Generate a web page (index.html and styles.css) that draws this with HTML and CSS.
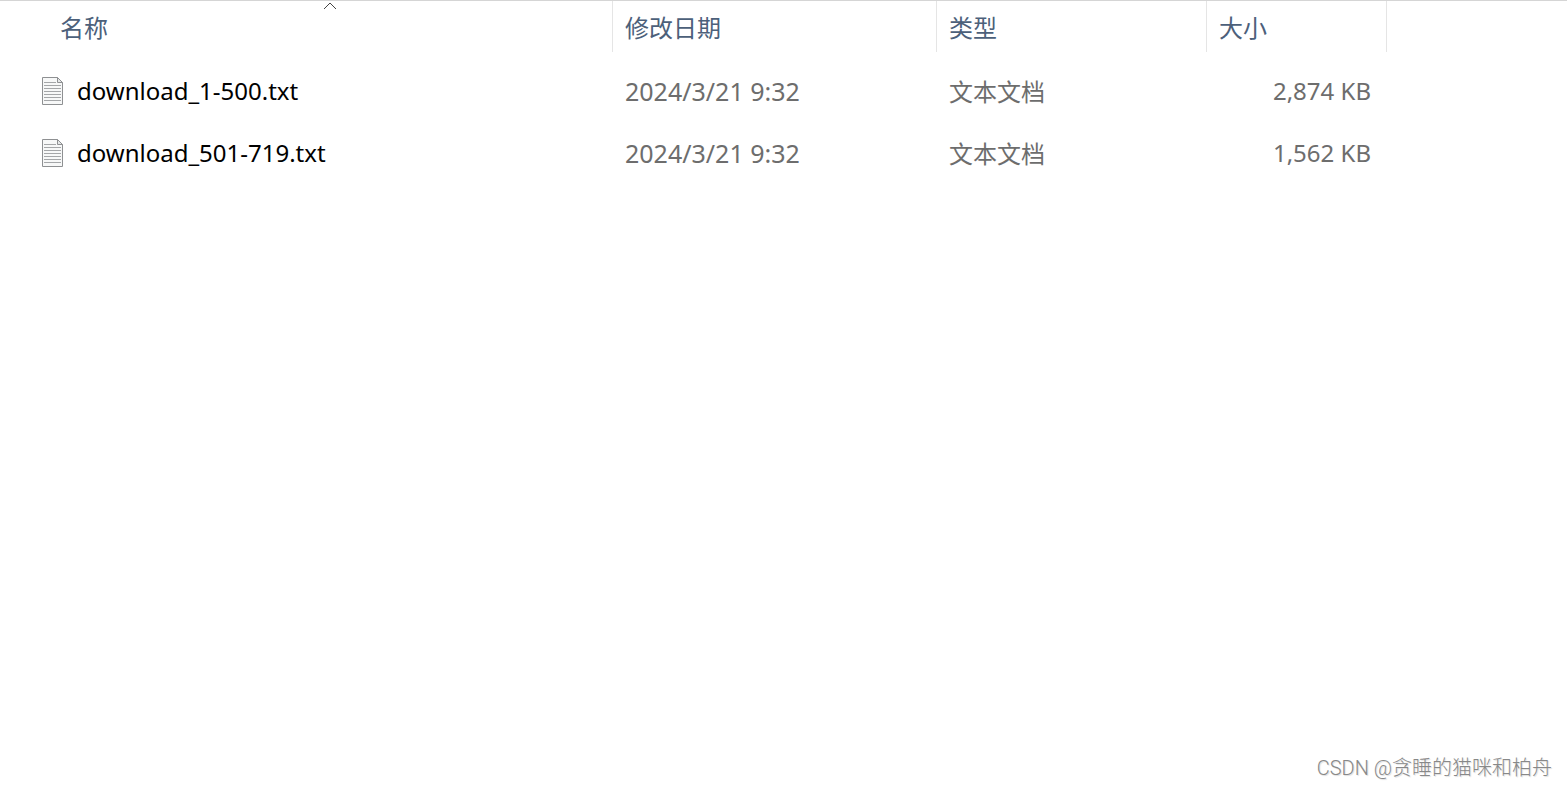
FILE: index.html
```html
<!DOCTYPE html>
<html lang="zh-CN">

<head>
  <meta charset="UTF-8">
  <title>文件列表</title>
  <meta name="viewport" content="width=device-width, initial-scale=1.0">
  <link rel="stylesheet" href="styles.css">
</head>

<body>
<svg class="sprite" aria-hidden="true">
  <symbol id="icon-txt" viewBox="0 0 21 28">
    <path d="M0.5 0.5H15.5L20.5 5.5V27.5H0.5Z" fill="#f7f8f8" stroke="#8e9092"/>
    <path d="M15.5 0.5V5.5H20.5Z" fill="#e6e8e9" stroke="#8e9092"/>
    <path d="M2 5.5H14M2 8.5H19M2 11.5H19M2 14.5H19M2 17.5H19M2 20.5H19M2 23.5H19" fill="none" stroke="#a4a6a8"/>
  </symbol>
</svg>

<main class="explorer">
  <table class="file-table">
    <colgroup>
      <col class="col-name">
      <col class="col-date">
      <col class="col-type">
      <col class="col-size">
      <col>
    </colgroup>
    <thead>
      <tr>
        <th class="name" aria-sort="ascending">
          名称
          <!-- 排序箭头 -->
          <svg class="sort-arrow" viewBox="0 0 14 8"><path d="M1 8L7 2L13 8" fill="none" stroke="#444"/></svg>
        </th>
        <th>修改日期</th>
        <th>类型</th>
        <th>大小</th>
        <td></td>
      </tr>
    </thead>
    <tbody>
      <tr>
        <td class="name">
          <div class="file"><svg class="file-icon"><use href="#icon-txt"/></svg>download_1-500.txt</div>
        </td>
        <td class="date">2024/3/21 9:32</td>
        <td class="type">文本文档</td>
        <td class="size">2,874 KB</td>
        <td></td>
      </tr>
      <tr>
        <td class="name">
          <div class="file"><svg class="file-icon"><use href="#icon-txt"/></svg>download_501-719.txt</div>
        </td>
        <td class="date">2024/3/21 9:32</td>
        <td class="type">文本文档</td>
        <td class="size">1,562 KB</td>
        <td></td>
      </tr>
    </tbody>
  </table>

  <footer class="watermark">CSDN @贪睡的猫咪和柏舟</footer>
</main>
</body>
</html>
```

FILE: styles.css
```css
body {
  margin: 0;
  background-color: #fff;
  font-family: "Noto Sans", "Noto Sans CJK SC", sans-serif;
  color: #6d6d6d;
}

.sprite {
  display: none;
}

.explorer {
  display: flex;
  flex-direction: column;
  justify-content: space-between;
  min-height: 100vh;
  box-sizing: border-box;
  border-top: 1px solid #d5d5d5;
}

.file-table {
  width: 100%;
  table-layout: fixed;
  border-collapse: separate;
  border-spacing: 0;
  font-size: 24px;
  line-height: 32px;
}

.col-name {
  width: 613px;
}

.col-date {
  width: 324px;
}

.col-type {
  width: 270px;
}

.col-size {
  width: 180px;
}

th, td {
  padding: 0 12px;
  text-align: left;
  white-space: nowrap;
}

th {
  position: relative;
  height: 51px;
  box-sizing: border-box;
  border-right: 1px solid #e5e5e5;
  font-family: "Noto Sans CJK SC", sans-serif;
  font-weight: 400;
  color: #4c607a;
}

th.name {
  padding-left: 60px;
}

.sort-arrow {
  position: absolute;
  top: 0;
  left: 323px;
  width: 14px;
  height: 8px;
}

tbody td {
  height: 62px;
}

tbody::before {
  content: "";
  display: table-row;
  height: 8px;
}

td.name {
  padding-left: 42px;
  color: #000;
}

.file {
  display: flex;
  align-items: center;
  gap: 14px;
}

.file-icon {
  width: 21px;
  height: 28px;
}

td.date {
  font-size: 25px;
}

td.type {
  font-family: "Noto Sans CJK SC", sans-serif;
}

td.size {
  padding-right: 16px;
  text-align: right;
}

.watermark {
  padding: 0 15px 4px;
  text-align: right;
  font-family: Roboto, "Noto Sans CJK SC", sans-serif;
  font-size: 20px;
  font-weight: 300;
  line-height: 30px;
  color: #888;
  text-shadow: 1px 1px 1px #ddd;
}
```
